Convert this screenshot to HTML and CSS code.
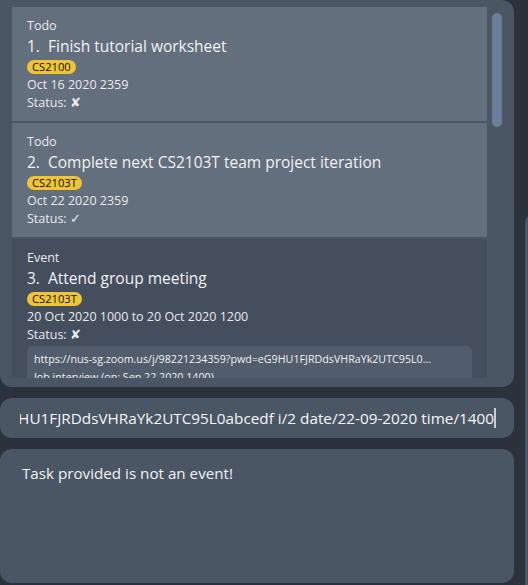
FILE: index.html
```html
<!DOCTYPE html>
<html>
<head>
<meta charset="utf-8">
<link rel="stylesheet" href="styles.css">
</head>
<body>
<div class="app">
  <div class="main-col">
    <section class="list-panel">
      <div class="list-viewport">
        <div class="cell cell-light">
          <div class="type">Todo</div>
          <div class="title">1.&nbsp; Finish tutorial worksheet</div>
          <div class="tags"><span class="tag">CS2100</span></div>
          <div class="line">Oct 16 2020 2359</div>
          <div class="line">Status: <span class="mark">✘</span></div>
        </div>
        <div class="cell cell-light">
          <div class="type">Todo</div>
          <div class="title">2.&nbsp; Complete next CS2103T team project iteration</div>
          <div class="tags"><span class="tag">CS2103T</span></div>
          <div class="line">Oct 22 2020 2359</div>
          <div class="line">Status: <span class="mark">✓</span></div>
        </div>
        <div class="cell cell-dark">
          <div class="type">Event</div>
          <div class="title">3.&nbsp; Attend group meeting</div>
          <div class="tags"><span class="tag">CS2103T</span></div>
          <div class="line">20 Oct 2020 1000 to 20 Oct 2020 1200</div>
          <div class="line">Status: <span class="mark">✘</span></div>
          <div class="links">
            <div class="link">https://nus-sg.zoom.us/j/98221234359?pwd=eG9HU1FJRDdsVHRaYk2UTC95L0...</div>
            <div class="link">Job interview (on: Sep 22 2020 1400)</div>
          </div>
        </div>
      </div>
      <div class="scroll-track"><div class="scroll-thumb"></div></div>
    </section>
    <div class="command-box">
      <div class="command-text"><span>link/https://nus-sg.zoom.us/j/98221234359?pwd=eG9HU1FJRDdsVHRaYk2UTC95L0abcedf i/2 date/22-09-2020 time/1400</span><span class="caret"></span></div>
    </div>
    <div class="result-box">
      <div class="result-text">Task provided is not an event!</div>
    </div>
  </div>
  <div class="side-col">
    <div class="side-panel"></div>
  </div>
</div>
</body>
</html>
```
FILE: styles.css
```css
* { box-sizing: border-box; }
html, body {
  margin: 0;
  padding: 0;
  width: 528px;
  height: 585px;
  overflow: hidden;
  background: #2b323c;
  font-family: "Open Sans", "Noto Sans", sans-serif;
  color: #eef0f2;
}
.app {
  display: flex;
  gap: 11px;
  width: 560px;
  height: 585px;
}
.main-col {
  width: 514px;
  flex: none;
  display: flex;
  flex-direction: column;
  gap: 11px;
}
.list-panel {
  height: 387px;
  background: #4b5664;
  border-radius: 0 12px 12px 12px;
  padding: 7px 0 9px 12px;
  display: flex;
  gap: 5px;
}
.list-viewport {
  width: 475px;
  height: 371px;
  overflow: hidden;
  display: flex;
  flex-direction: column;
  gap: 2px;
}
.cell {
  flex: none;
  padding: 10px 15px 10px 15px;
}
.cell-light { background: #646f7d; height: 114px; }
.cell-dark { background: #444e5d; }
.type {
  font-size: 12.5px;
  line-height: 18px;
  color: #e9ebee;
}
.title {
  font-size: 15.5px;
  font-weight: 500;
  line-height: 23px;
  color: #f1f2f4;
}
.tags {
  height: 18px;
  display: flex;
  align-items: center;
}
.tag {
  background: #f0c435;
  color: #111;
  font-size: 11.2px;
  line-height: 14px;
  padding: 0 5px;
  border-radius: 7px;
}
.line {
  font-size: 12.5px;
  line-height: 17.5px;
  color: #e9ebee;
}
.mark { font-family: "DejaVu Sans", sans-serif; font-size: 13px; font-weight: bold; }
.links {
  margin-top: 3px;
  background: #515c6c;
  border-radius: 5px;
  padding: 4px 7px;
  width: 445px;
}
.link {
  font-size: 10.7px;
  line-height: 18px;
  white-space: nowrap;
  overflow: hidden;
  color: #f0f2f4;
}
.scroll-track {
  width: 10px;
  padding-top: 6px;
}
.scroll-thumb {
  width: 10px;
  height: 114px;
  background: #6c7e97;
  border-radius: 5px;
}
.command-box {
  height: 40px;
  background: #4b5664;
  border-radius: 12px;
  display: flex;
  align-items: center;
  padding: 0 18px 0 20px;
}
.command-text {
  width: 100%;
  overflow: hidden;
  white-space: nowrap;
  display: flex;
  justify-content: flex-end;
  align-items: center;
  font-size: 15.3px;
  color: #f4f6fa;
}
.command-text span { flex: none; }
.caret {
  width: 2px;
  height: 20px;
  background: #c9ced6;
  margin-left: 0;
}
.result-box {
  height: 134px;
  background: #4b5664;
  border-radius: 12px;
  padding: 13px 22px;
}
.result-text {
  font-size: 15.2px;
  line-height: 22px;
  color: #f0f2f4;
}
.side-col {
  padding-top: 212px;
  flex: none;
}
.side-panel {
  width: 40px;
  height: 400px;
  background: #4b5664;
  border-radius: 12px 0 0 0;
}
```
